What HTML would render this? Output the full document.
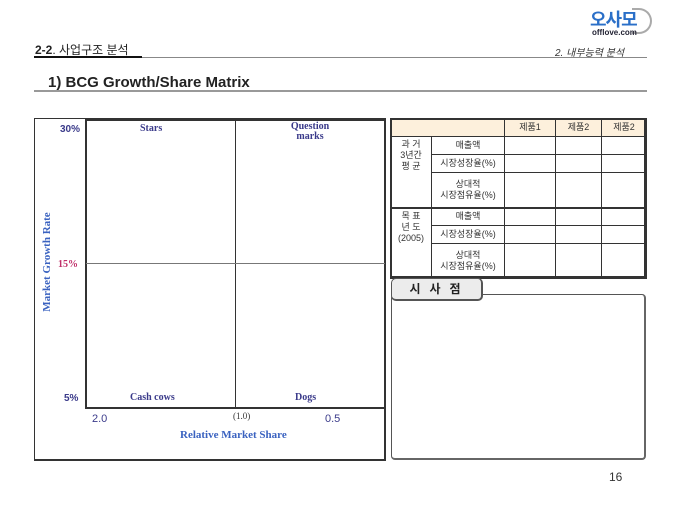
<!DOCTYPE html>
<html><head><meta charset="utf-8"><style>
*{margin:0;padding:0;box-sizing:border-box}
body{width:680px;height:510px;background:#fff;position:relative;overflow:hidden;font-family:"Liberation Sans","Noto Sans CJK KR",sans-serif}
.a{position:absolute}
.s{font-family:"Liberation Serif","Noto Serif CJK SC",serif;font-weight:bold;color:#3a3a8a;font-size:10px;text-align:center;line-height:10px}
table{border-collapse:collapse;position:absolute;left:390px;top:118px;width:256px;table-layout:fixed}
td{border:1px solid #333;font-size:9px;color:#333;text-align:center;line-height:11px;padding:0}
</style></head><body>
<div class="a" style="left:35px;top:41px;font-size:12px;color:#222"><b>2-2</b>. 사업구조 분석</div>
<div class="a" style="left:34px;top:56px;width:108px;height:2px;background:#111"></div>
<div class="a" style="left:142px;top:57px;width:505px;height:1px;background:#888"></div>
<div class="a" style="left:555px;top:44px;font-size:10px;font-style:italic;color:#333">2. 내부능력 분석</div>
<div class="a" style="left:590px;top:6px;font-size:18px;font-weight:bold;color:#2a6fc8;letter-spacing:-1px">오사모</div>
<div class="a" style="left:632px;top:8px;width:20px;height:26px;border:2px solid #aaa;border-left:none;border-radius:0 14px 14px 0"></div>
<div class="a" style="left:592px;top:28px;font-size:8px;font-weight:bold;color:#223">offlove.com</div>
<div class="a" style="left:48px;top:74px;font-size:15px;font-weight:bold;color:#222">1) BCG Growth/Share Matrix</div>
<div class="a" style="left:34px;top:90px;width:613px;height:2px;background:#999"></div>

<div class="a" style="left:34px;top:118px;width:352px;height:343px;border:1px solid #333;border-right:2px solid #333;border-bottom:2px solid #333"></div>
<div class="a" style="left:85px;top:119px;width:301px;height:290px;border:2px solid #333"></div>
<div class="a" style="left:235px;top:120px;width:1px;height:288px;background:#333"></div>
<div class="a" style="left:86px;top:263px;width:299px;height:1px;background:#777"></div>
<div class="a s" style="left:60px;top:125px;font-family:'Liberation Sans',sans-serif">30%</div>
<div class="a s" style="left:58px;top:260px;color:#c0306a">15%</div>
<div class="a s" style="left:64px;top:394px;font-family:'Liberation Sans',sans-serif">5%</div>
<div class="a s" style="left:140px;top:124px">Stars</div>
<div class="a s" style="left:280px;top:122px;width:60px">Question<br>marks</div>
<div class="a s" style="left:130px;top:393px">Cash cows</div>
<div class="a s" style="left:295px;top:393px">Dogs</div>
<div class="a" style="left:92px;top:413px;font-size:11px;color:#3a3a8a">2.0</div>
<div class="a" style="left:233px;top:411px;font-size:9px;color:#333;font-family:'Liberation Serif',serif">(1.0)</div>
<div class="a" style="left:325px;top:413px;font-size:11px;color:#3a3a8a">0.5</div>
<div class="a s" style="left:180px;top:430px;color:#3a62c0;font-size:11px">Relative Market Share</div>
<div class="a s" style="left:-13px;top:257px;color:#3a62c0;font-size:11px;transform:rotate(-90deg);width:120px">Market Growth Rate</div>

<table>
<colgroup><col style="width:41px"><col style="width:73px"><col style="width:51px"><col style="width:46px"><col style="width:45px"></colgroup>
<tr style="height:18px;background:#fdf0dc"><td colspan="2"></td><td>제품1</td><td>제품2</td><td>제품2</td></tr>
<tr style="height:18px"><td rowspan="3" style="vertical-align:top;padding-top:2px">과 거<br>3년간<br>평 균</td><td>매출액</td><td></td><td></td><td></td></tr>
<tr style="height:18px"><td>시장성장율(%)</td><td></td><td></td><td></td></tr>
<tr style="height:35px"><td>상대적<br>시장점유율(%)</td><td></td><td></td><td></td></tr>
<tr style="height:18px;border-top:2px solid #333"><td rowspan="3" style="vertical-align:top;padding-top:2px">목 표<br>년 도<br>(2005)</td><td>매출액</td><td></td><td></td><td></td></tr>
<tr style="height:18px"><td>시장성장율(%)</td><td></td><td></td><td></td></tr>
<tr style="height:35px"><td>상대적<br>시장점유율(%)</td><td></td><td></td><td></td></tr>
</table>
<div class="a" style="left:390px;top:118px;width:256px;height:160px;border:2px solid #333;pointer-events:none"></div>

<div class="a" style="left:391px;top:294px;width:255px;height:166px;border:1px solid #555;border-right:2px solid #666;border-bottom:2px solid #666;border-radius:4px"></div>
<div class="a" style="left:391px;top:278px;width:92px;height:23px;background:#ececec;border:1px solid #555;border-right:2px solid #555;border-bottom:2px solid #555;border-radius:5px;font-size:12px;font-weight:bold;color:#222;text-align:center;line-height:20px;letter-spacing:9px;padding-left:6px">시사점</div>

<div class="a" style="left:609px;top:470px;font-size:12px;color:#333">16</div>
</body></html>
